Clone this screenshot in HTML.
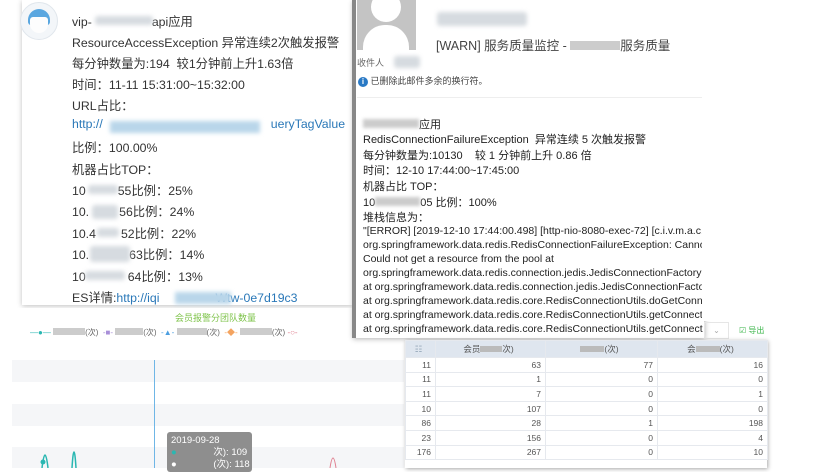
<!DOCTYPE html>
<html><head><meta charset="utf-8"><style>
*{margin:0;padding:0;box-sizing:border-box}
body{width:824px;height:468px;overflow:hidden;background:#fff;position:relative;font-family:"Liberation Sans","Noto Sans CJK SC",sans-serif}
.a{position:absolute;white-space:nowrap}
.blur{position:absolute;background:#d6dbe0;filter:blur(2px);border-radius:3px}
.bl{position:absolute;background:#b9d6ea;filter:blur(2px)}
.l1 div{position:absolute;left:72px;font-size:12.3px;color:#333}
.l2 div{position:absolute;left:363px;font-size:11px;color:#222}
td{border:1px solid #e6e9ee;font-size:8.5px;color:#555;text-align:right;padding-right:4px;height:14.6px}
</style></head><body>
<div class="a" style="left:22px;top:0;width:330px;height:305px;background:#fff;box-shadow:0 1px 5px rgba(0,0,0,.25)"></div>
<div class="a" style="left:20px;top:2px;width:38px;height:38px;border-radius:50%;background:#f3f6f9;border:1px solid #e0e6ec;overflow:hidden"><div style="position:absolute;left:7px;top:6px;width:22px;height:16px;border-radius:11px 11px 3px 3px;background:#5aa7e0"></div><div style="position:absolute;left:9px;top:14px;width:18px;height:16px;border-radius:3px 3px 9px 9px;background:#fdfdfd"></div></div>
<div class="l1">
<div style="top:12px">vip-<span style="display:inline-block;width:60px"></span>api应用</div>
<div style="top:33px">ResourceAccessException 异常连续2次触发报警</div>
<div style="top:54px">每分钟数量为:194&nbsp; 较1分钟前上升1.63倍</div>
<div style="top:75px">时间：11-11 15:31:00~15:32:00</div>
<div style="top:96px">URL占比：</div>
<div style="top:117px;color:#2a78b8">http://<span style="display:inline-block;width:168px"></span>ueryTagValue</div>
<div style="top:138px">比例：100.00%</div>
<div style="top:160px">机器占比TOP：</div>
<div style="top:181px">10<span style="display:inline-block;width:32px"></span>55比例：25%</div>
<div style="top:202px">10.<span style="display:inline-block;width:30px"></span>56比例：24%</div>
<div style="top:224px">10.4<span style="display:inline-block;width:25px"></span>52比例：22%</div>
<div style="top:245px">10.<span style="display:inline-block;width:40px"></span>63比例：14%</div>
<div style="top:267px">10<span style="display:inline-block;width:42px"></span>64比例：13%</div>
<div style="top:288px">ES详情:<span style="color:#2a78b8">http://iqi<span style="display:inline-block;width:56px"></span>Wtw-0e7d19c3</span></div>
</div>
<div class="blur" style="left:95px;top:16px;width:58px;height:9px"></div>
<div class="bl" style="left:110px;top:121px;width:150px;height:12px"></div>
<div class="blur" style="left:88px;top:185px;width:30px;height:9px"></div>
<div class="blur" style="left:92px;top:205px;width:26px;height:14px"></div>
<div class="blur" style="left:97px;top:228px;width:22px;height:9px"></div>
<div class="blur" style="left:90px;top:246px;width:40px;height:16px"></div>
<div class="blur" style="left:85px;top:271px;width:40px;height:9px"></div>
<div class="bl" style="left:175px;top:292px;width:56px;height:12px"></div>
<div class="a" style="left:12px;top:308px;width:392px;height:160px;background:#fff"></div>
<div class="a" style="left:12px;top:360px;width:392px;height:22px;background:#f5f6f8"></div>
<div class="a" style="left:12px;top:404px;width:392px;height:22px;background:#f5f6f8"></div>
<div class="a" style="left:12px;top:447px;width:392px;height:21px;background:#f5f6f8"></div>
<div class="a" style="left:175px;top:311px;font-size:9px;color:#7ec34a">会员报警分团队数量</div>
<div class="a" style="left:30px;top:327px;font-size:8px;color:#666">
<span style="color:#2ab7b2">—●—</span> <span style="display:inline-block;width:32px;height:7px;background:#ccc"></span>(次) &nbsp;<span style="color:#a88fd8">-■-</span> <span style="display:inline-block;width:28px;height:7px;background:#ccc"></span>(次) &nbsp;<span style="color:#4c9ee0">-▲-</span> <span style="display:inline-block;width:30px;height:7px;background:#ccc"></span>(次) &nbsp;<span style="color:#f4a460">-◆-</span> <span style="display:inline-block;width:32px;height:7px;background:#ccc"></span>(次) <span style="color:#e08090">-○-</span></div>
<div class="a" style="left:154px;top:360px;width:1px;height:108px;background:#6fb6e6"></div>
<svg class="a" style="left:12px;top:440px" width="392" height="28"><path d="M30 28 Q33 2 36 28 M60 28 Q62 -4 64 28" stroke="#2ab7b2" fill="none" stroke-width="1.5"/><circle cx="31" cy="22" r="2.5" fill="#2ab7b2"/><path d="M318 28 Q321 8 324 28" stroke="#e08090" fill="none"/></svg>
<div class="a" style="left:167px;top:432px;width:85px;height:40px;background:#8e8e8e;border-radius:3px;color:#fff;font-size:9.5px;padding:3px 4px;line-height:12px">2019-09-28<br><span style="color:#2ab7b2">●</span> <span style="display:inline-block;width:34px"></span>次): 109<br>● <span style="display:inline-block;width:34px"></span>(次): 118</div>
<div class="a" style="left:352px;top:0;width:352px;height:338px;background:#fff;box-shadow:1px 1px 5px rgba(0,0,0,.3);border-left:4px solid #888"></div>
<div class="a" style="left:357px;top:0;width:59px;height:50px;background:#c4c4c4;overflow:hidden"><div style="position:absolute;left:14px;top:-8px;width:30px;height:30px;border-radius:50%;background:#fff"></div><div style="position:absolute;left:6px;top:25px;width:46px;height:40px;border-radius:22px 22px 0 0;background:#fff"></div></div>
<div class="blur" style="left:437px;top:12px;width:90px;height:14px"></div>
<div class="a" style="left:436px;top:35px;font-size:12.5px;color:#444">[WARN] 服务质量监控 - <span style="display:inline-block;width:50px;height:9px;background:#ccc"></span>服务质量</div>
<div class="a" style="left:357px;top:56px;font-size:9px;color:#666">收件人</div>
<div class="blur" style="left:394px;top:56px;width:26px;height:12px"></div>
<div class="a" style="left:358px;top:74px;font-size:9px;color:#444"><span style="display:inline-block;width:10px;height:10px;border-radius:50%;background:#2979c5;color:#fff;font-size:8px;text-align:center;line-height:10px;font-weight:bold">i</span> 已删除此邮件多余的换行符。</div>
<div class="a" style="left:357px;top:97px;width:345px;height:1px;background:#eee"></div>
<div class="l2">
<div style="top:116px"><span style="display:inline-block;width:56px;height:9px;background:#ccc;filter:blur(1.5px)"></span>应用</div>
<div style="top:131px">RedisConnectionFailureException&nbsp; 异常连续 5 次触发报警</div>
<div style="top:147px">每分钟数量为:10130&nbsp;&nbsp;&nbsp; 较 1 分钟前上升 0.86 倍</div>
<div style="top:162px">时间：12-10 17:44:00~17:45:00</div>
<div style="top:178px">机器占比 TOP：</div>
<div style="top:194px">10<span style="display:inline-block;width:45px;height:9px;background:#ccc;filter:blur(1.5px)"></span>05 比例：100%</div>
<div style="top:209px">堆栈信息为：</div>
<div style="top:225px;font-size:10.5px">"[ERROR] [2019-12-10 17:44:00.498] [http-nio-8080-exec-72] [c.i.v.m.a.c.</div>
<div style="top:239px;font-size:10.5px">org.springframework.data.redis.RedisConnectionFailureException: Cannot</div>
<div style="top:253px;font-size:10.5px">Could not get a resource from the pool at</div>
<div style="top:267px;font-size:10.5px">org.springframework.data.redis.connection.jedis.JedisConnectionFactory</div>
<div style="top:281px;font-size:10.5px">at org.springframework.data.redis.connection.jedis.JedisConnectionFacto</div>
<div style="top:295px;font-size:10.5px">at org.springframework.data.redis.core.RedisConnectionUtils.doGetConn</div>
<div style="top:309px;font-size:10.5px">at org.springframework.data.redis.core.RedisConnectionUtils.getConnect</div>
<div style="top:323px;font-size:10.5px">at org.springframework.data.redis.core.RedisConnectionUtils.getConnect</div>
</div>
<div class="a" style="left:702px;top:0;width:122px;height:321px;background:#fff"></div>
<div class="a" style="left:704px;top:322px;width:25px;height:17px;border:1px solid #e6e6e6;font-size:8px;color:#aaa;text-align:center;line-height:15px">⌄</div>
<div class="a" style="left:739px;top:325px;font-size:8px;color:#3bb54a">☑ 导出</div>
<div class="a" style="left:405px;top:340px;width:362px;height:128px;background:#fff;box-shadow:1px 1px 4px rgba(0,0,0,.35)"></div>
<table class="a" style="left:405px;top:340px;width:362px;border-collapse:collapse;background:#fff;table-layout:fixed">
<colgroup><col style="width:30px"><col style="width:110px"><col style="width:112px"><col style="width:110px"></colgroup>
<tr style="background:#dfe6ef;height:17px"><td style="text-align:center;color:#9ab">☷</td><td style="text-align:center;color:#555">会员<span style="display:inline-block;width:22px;height:6px;background:#bbb"></span>次)</td><td style="text-align:center"><span style="display:inline-block;width:24px;height:6px;background:#bbb"></span>(次)</td><td style="text-align:center">会<span style="display:inline-block;width:24px;height:6px;background:#bbb"></span>(次)</td></tr>
<tr><td>11</td><td>63</td><td>77</td><td>16</td></tr>
<tr><td>11</td><td>1</td><td>0</td><td>0</td></tr>
<tr><td>11</td><td>7</td><td>0</td><td>1</td></tr>
<tr><td>10</td><td>107</td><td>0</td><td>0</td></tr>
<tr><td>86</td><td>28</td><td>1</td><td>198</td></tr>
<tr><td>23</td><td>156</td><td>0</td><td>4</td></tr>
<tr><td>176</td><td>267</td><td>0</td><td>10</td></tr>
</table>
</body></html>
